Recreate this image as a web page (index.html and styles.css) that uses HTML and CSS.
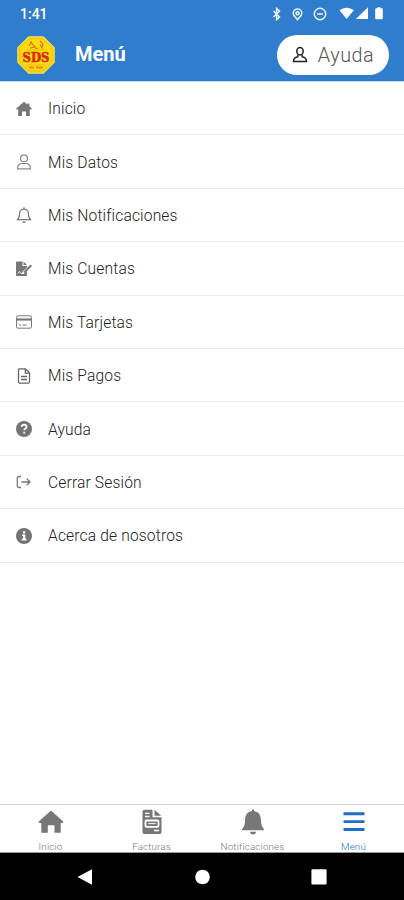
FILE: index.html
```html
<!DOCTYPE html>
<html lang="es">
<head>
  <meta charset="UTF-8">
  <meta name="viewport" content="width=device-width, initial-scale=1.0">
  <title>Menú</title>
  <link rel="stylesheet" href="styles.css">
</head>
<body>
  <div class="phone">
    <!-- Encabezado -->
    <header class="header">
      <div class="status">
        <span class="time">1:41</span>
        <svg class="status-icons" width="112" height="16" viewBox="0 0 112 16">
          <g fill="none" stroke="#eaf3fc" stroke-width="1.5">
            <path d="M1.500 5l6 6L4.600 13.500V2.500L7.500 5l-6 6"/>
            <path d="M25.500 13.700c-2-2.500-4.300-4.300-4.300-6.300a4.300 4.300 0 0 1 8.600 0c0 2-2.300 3.800-4.300 6.300z"/>
            <circle cx="25.500" cy="7.300" r="1.500"/>
            <circle cx="48" cy="8" r="5.700"/>
            <path d="M45 8h6"/>
          </g>
          <g fill="#fff">
            <path d="M67.500 4.200c4.500-3.400 10-3.400 14.300 0L74.700 13z"/>
            <path d="M96 1.200V13H83.800z"/>
            <path d="M104 2.300h1.500V1.200h3v1.100h1.500q.8 0 .8.800v9.200q0 1-.8 1h-6q-.8 0-.8-1V3.100q0-.8.800-.8z"/>
          </g>
        </svg>
      </div>
      <div class="title-bar">
        <svg class="logo" width="38" height="38" viewBox="0 0 38 38">
          <path d="M11.500.700h15L37.300 11.500v15L26.500 37.300h-15L.7 26.500v-15z" fill="#f8dc10" stroke="#e5d476" stroke-width="1"/>
          <path d="M12.200 2.800h13.600l9.400 9.400v13.600l-9.400 9.400H12.200l-9.400-9.400V12.200z" fill="none" stroke="#f5b50c" stroke-width=".8"/>
          <path d="M12 10l2-4 2 3 2 2-5 1m10-7 3 3-1 4-2-4m-5 4 3 .5" fill="none" stroke="#d87912" stroke-width="1.200"/>
          <path d="M9 14h20M9 29h20" stroke="#f0ac16" stroke-width=".7"/>
          <text class="logo-name" x="19" y="25.500" text-anchor="middle" textLength="27" lengthAdjust="spacingAndGlyphs">SDS</text>
          <path d="M12 31.500h5m2 0h7" stroke="#e7890f" stroke-width="1.800"/>
        </svg>
        <h1>Menú</h1>
        <button class="help">
          <svg width="16" height="18" viewBox="0 0 16 18" fill="none" stroke="#222" stroke-width="1.500">
            <ellipse cx="8" cy="5.200" rx="3.200" ry="3.700"/>
            <path d="M5.800 8.500v2.300Q1.500 11.500 1.500 15.600h13q0-4.100-4.300-4.800V8.500"/>
          </svg>
          <span>Ayuda</span>
        </button>
      </div>
    </header>

    <!-- Opciones del menú -->
    <ul class="menu">
      <li>
        <svg viewBox="0 0 16 16" fill="#777"><path d="M8 .700L11.500 3.600V2.500h2v2.900L16 7.700l-.7.800h-1.500V15H10v-4.500H6V15H2.200V8.500H.7L0 7.700z"/></svg>
        <span>Inicio</span>
      </li>
      <li>
        <svg viewBox="0 0 16 16" fill="none" stroke="#898989" stroke-width="1.200"><circle cx="8" cy="4.300" r="3.500"/><path d="M5.500 9.500h5q4 .5 4 5.300h-13q0-4.800 4-5.300z"/></svg>
        <span>Mis Datos</span>
      </li>
      <li>
        <svg viewBox="0 0 16 16" fill="none" stroke="#777" stroke-width="1.200"><path d="M8 .200v1.600M1.500 12.700c2.200-2 1.900-3.700 2.100-6.200a4.400 4.400 0 0 1 8.800 0c.2 2.500-.1 4.200 2.100 6.200zM6.500 14.700q1.500 1.200 3 0"/></svg>
        <span>Mis Notificaciones</span>
      </li>
      <li>
        <svg viewBox="0 0 16 16"><path d="M0 1.500q0-1 1-1h5.500V5H11v1.500L6.500 10.500l-.7 2.500 2.500-.5L11 10v4q0 1-1 1H1q-1 0-1-1z" fill="#777"/><path d="M7.500.500L11 4H7.500z" fill="#777"/><path d="M2 12.500l1.500-2 1.500 2h3" fill="none" stroke="#fff" stroke-width=".9"/><path d="M8 11.500L15.300 4.200" stroke="#777" stroke-width="2"/></svg>
        <span>Mis Cuentas</span>
      </li>
      <li>
        <svg viewBox="0 0 16 16" fill="none" stroke="#777" stroke-width="1"><rect x=".5" y="1.800" width="15" height="12.400" rx="1.500"/><path d="M.5 5.500h15" stroke-width="2.200"/><path d="M3 11h2m1.500 0h4"/></svg>
        <span>Mis Tarjetas</span>
      </li>
      <li>
        <svg viewBox="0 0 16 16" fill="none" stroke="#666" stroke-width="1.300"><path d="M3.300.800h6.200l4 4v9q0 1.400-1.400 1.400H3.900q-1.400 0-1.400-1.400V2.200Q2.500.8 3.300.8zM9.300.800v4.300h4.200M5 8.500h6M5 11.500h6"/></svg>
        <span>Mis Pagos</span>
      </li>
      <li>
        <svg viewBox="0 0 16 16"><circle cx="8" cy="8" r="8" fill="#747474"/><path d="M5.600 6c0-3.200 5-3 5 0 0 1.600-2.500 1.500-2.500 3.300M8.100 10.800v1.700" fill="none" stroke="#fff" stroke-width="1.700"/></svg>
        <span>Ayuda</span>
      </li>
      <li>
        <svg viewBox="0 0 16 16" fill="none" stroke="#777" stroke-width="1.300"><path d="M5 2.500H3q-1.700 0-1.700 1.700v7.600q0 1.700 1.700 1.700h2M5.500 8h8.500M10.800 4.800L14 8l-3.200 3.200"/></svg>
        <span>Cerrar Sesión</span>
      </li>
      <li>
        <svg viewBox="0 0 16 16"><circle cx="8" cy="8" r="8" fill="#747474"/><path d="M7 3.200h2.300v2.200H7zM6 6.500h3.300v4.300h1.200v1.600H5.700v-1.600H7V8H6z" fill="#fff"/></svg>
        <span>Acerca de nosotros</span>
      </li>
    </ul>

    <!-- Pestañas inferiores -->
    <nav class="tabs">
      <a class="tab">
        <svg width="26" height="26" viewBox="0 0 26 26" fill="#777"><path d="M13 1.500L25.500 12.800l-.8 1.200h-2v9.800h-6.200v-7.500H9.800v7.500H3.300V14h-2l-.8-1.200z"/></svg>
        <span>Inicio</span>
      </a>
      <a class="tab">
        <svg width="26" height="26" viewBox="0 0 26 26"><path d="M5.500.800h8v7.500h9V23q0 2-2 2h-15q-2 0-2-2V2.800q0-2 2-2z" fill="#777"/><path d="M15.500.800l6.700 6h-6.700z" fill="#777"/><path d="M6 4.300h4.500M6 7.500h4.500M15 21.500h5" stroke="#fff" stroke-width="1.300"/><rect x="6.500" y="11.500" width="13" height="6.300" rx="1" fill="none" stroke="#fff" stroke-width="1.800"/><path d="M9.500 14.600h7" stroke="#fff" stroke-width="1"/></svg>
        <span>Facturas</span>
      </a>
      <a class="tab">
        <svg width="26" height="26" viewBox="0 0 26 26" fill="#777"><path d="M12 2V.500h2V2c4.600.700 6.700 4 6.900 8.400.2 4.800.8 7.300 3 9.600v1.300H2.100V20c2.200-2.300 2.800-4.800 3-9.600C5.300 6 7.400 2.700 12 2zM9.700 22.700h6.600q-1 2.700-3.300 2.700t-3.300-2.700z"/></svg>
        <span>Notificaciones</span>
      </a>
      <a class="tab active">
        <svg width="26" height="26" viewBox="0 0 26 26" fill="#1e70c6"><path d="M2.500 3.300h21v3h-21zM2.500 11.200h21v2.800h-21zM2.500 18.900h21v3h-21z"/></svg>
        <span>Menú</span>
      </a>
    </nav>

    <!-- Botones del sistema -->
    <div class="system-bar">
      <svg width="16" height="18" viewBox="0 0 16 18" fill="#fff"><path d="M.5 9L15 1.200v15.600z"/></svg>
      <svg width="16" height="18" viewBox="0 0 16 18" fill="#fff"><circle cx="8.500" cy="9" r="7.300"/></svg>
      <svg width="16" height="18" viewBox="0 0 16 18" fill="#fff"><rect x=".4" y="1.300" width="15.200" height="15.200" rx=".8"/></svg>
    </div>
  </div>
</body>
</html>
```

FILE: styles.css
```css
* {
  box-sizing: border-box;
  margin: 0;
  padding: 0;
}
body {
  font-family: Roboto, sans-serif;
  background-color: #fff;
  color: #222;
}
svg {
  display: block;
  flex: none;
}
.phone {
  width: 404px;
  height: 900px;
  display: flex;
  flex-direction: column;
  overflow: hidden;
}

/* Encabezado */
.header {
  height: 81px;
  background-color: #307dce;
  border-bottom: 1px solid #237bc9;
  color: #fff;
}
.status {
  height: 28px;
  padding: 0 20px;
  display: flex;
  justify-content: space-between;
  align-items: center;
}
.time {
  font-size: 14px;
  font-weight: 500;
}
.title-bar {
  height: 53px;
  padding: 0 15px 0 17px;
  display: flex;
  align-items: center;
}
.logo-name {
  font-family: "DejaVu Serif", serif;
  font-size: 12px;
  font-weight: bold;
  fill: #e2260d;
  stroke: #e2260d;
  stroke-width: 0.5px;
}
h1 {
  margin-left: 20px;
  padding-bottom: 1px;
  font-size: 20px;
  font-weight: 700;
}
.help {
  width: 112px;
  height: 40px;
  margin-left: auto;
  border: none;
  border-radius: 20px;
  background-color: #fff;
  display: flex;
  align-items: center;
  justify-content: center;
  gap: 10px;
  font-family: inherit;
  font-size: 19.8px;
  font-weight: 300;
  letter-spacing: 0.5px;
  color: #555;
}
.help span {
  padding-top: 2px;
}

/* Lista de opciones */
.menu {
  flex: 1;
  list-style: none;
  border-top: 1px solid #c5dff9;
}
.menu li {
  height: 53.4px;
  padding: 1px 16px 0;
  border-bottom: 1px solid #ececec;
  display: flex;
  align-items: center;
  gap: 16px;
  font-size: 15.6px;
  font-weight: 300;
  letter-spacing: 0.15px;
}
.menu svg {
  width: 16px;
  height: 16px;
}
.menu span {
  padding-top: 1px;
}

/* Pestañas */
.tabs {
  height: 49px;
  border-top: 1px solid #d4d4d4;
  border-bottom: 1px solid #999;
  display: flex;
}
.tab {
  flex: 1;
  padding-top: 4px;
  display: flex;
  flex-direction: column;
  align-items: center;
  gap: 6px;
  font-size: 9.8px;
  font-weight: 300;
  letter-spacing: 0.15px;
  line-height: 12px;
  color: #777;
}
.tab.active {
  color: #1e70c6;
}

/* Barra del sistema */
.system-bar {
  height: 47px;
  padding: 0 77px;
  background-color: #000;
  display: flex;
  align-items: center;
  justify-content: space-between;
}
```
